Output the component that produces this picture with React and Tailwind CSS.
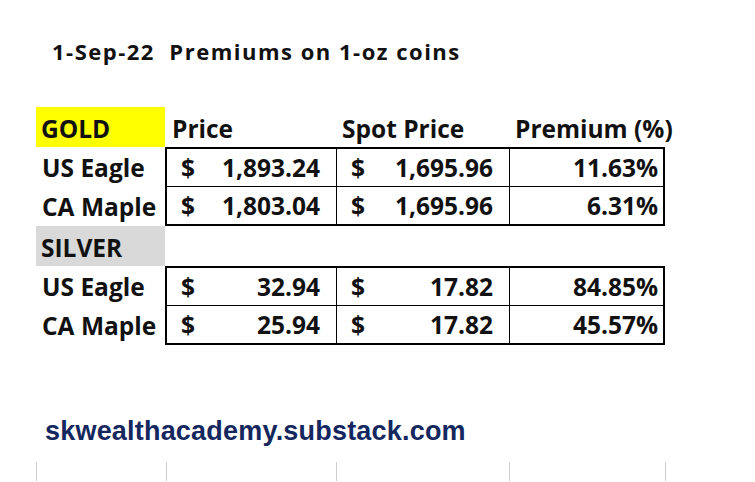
import React from "react";

const gold = [
  { name: "US Eagle", price: "1,893.24", spot: "1,695.96", prem: "11.63%" },
  { name: "CA Maple", price: "1,803.04", spot: "1,695.96", prem: "6.31%" },
];

const silver = [
  { name: "US Eagle", price: "32.94", spot: "17.82", prem: "84.85%" },
  { name: "CA Maple", price: "25.94", spot: "17.82", prem: "45.57%" },
];

const Money = ({ value, className = "" }) => (
  <div className={`flex items-end justify-between pl-[14px] pr-[16px] pb-[3px] ${className}`}>
    <span>$</span>
    <span>{value}</span>
  </div>
);

const Block = ({ rows }) => (
  <div className="flex">
    <div className="w-[129px] flex flex-col">
      {rows.map((r, i) => (
        <div key={i} className={`${i === 0 ? "h-[40px]" : "h-[39px]"} flex items-end pl-[6px] pb-[4px] whitespace-nowrap`}>
          {r.name}
        </div>
      ))}
    </div>
    <div className="border-2 border-black flex flex-col">
      {rows.map((r, i) => (
        <div
          key={i}
          className={`flex h-[37px] ${i === 0 ? "border-b border-black h-[38px]" : ""}`}
        >
          <Money value={r.price} className="w-[170px] border-r border-black" />
          <Money value={r.spot} className="w-[173px] border-r border-black" />
          <div className="w-[153px] flex items-end justify-end pr-[5px] pb-[3px]">{r.prem}</div>
        </div>
      ))}
    </div>
  </div>
);

export default function App() {
  return (
    <div className="w-[755px] h-[482px] bg-white overflow-hidden text-[#111] font-['Open_Sans',sans-serif] font-bold">
      <div className="pt-[36px] pl-[52px] h-[107px] text-[22px] leading-[30px] tracking-[1.5px] whitespace-pre">
        1-Sep-22  Premiums on 1-oz coins
      </div>

      <div className="pl-[36px] text-[24.5px] leading-[30px]">
        {/* gold header */}
        <div className="flex h-[40px] items-end">
          <div className="w-[129px] h-full bg-[#ffff00] flex items-end pl-[5px] pb-[3px]">GOLD</div>
          <div className="w-[171px] pl-[7px] pb-[3px]">Price</div>
          <div className="w-[173px] pl-[6px] pb-[3px]">Spot Price</div>
          <div className="pl-[6px] pb-[3px] whitespace-nowrap">Premium (%)</div>
        </div>
        <Block rows={gold} />

        {/* silver header */}
        <div className="flex h-[40px]">
          <div className="w-[129px] h-full bg-[#d9d9d9] flex items-end pl-[5px] pb-[3px]">SILVER</div>
        </div>
        <Block rows={silver} />
      </div>

      <div className="pt-[70px] pl-[45px] h-[117px] font-['Liberation_Sans',sans-serif] text-[#14275e] text-[27px] leading-[32px] tracking-[0.2px]">
        skwealthacademy.substack.com
      </div>

      <div className="flex pl-[36px] h-[19px]">
        <div className="w-[130px] border-l border-[#cfcfcf]" />
        <div className="w-[170px] border-l border-[#cfcfcf]" />
        <div className="w-[173px] border-l border-[#cfcfcf]" />
        <div className="w-[156px] border-l border-[#cfcfcf]" />
        <div className="w-[10px] border-l border-[#cfcfcf]" />
      </div>
    </div>
  );
}
